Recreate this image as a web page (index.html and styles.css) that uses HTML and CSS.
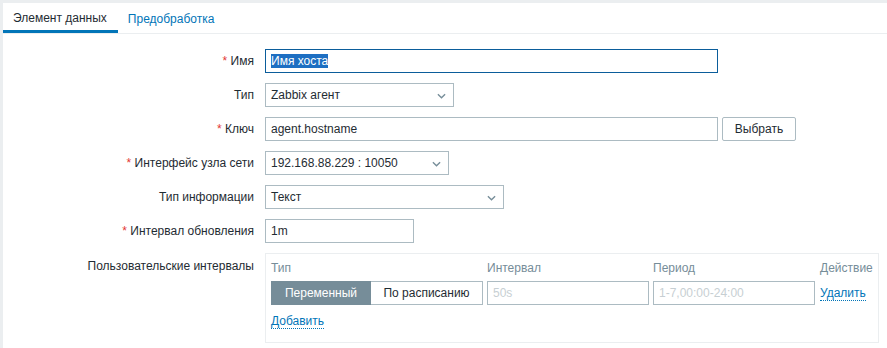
FILE: index.html
```html
<!DOCTYPE html>
<html>
<head>
<meta charset="utf-8">
<link rel="stylesheet" href="styles.css">
</head>
<body>
<div class="panel">
  <div class="tabs">
    <div class="tab active">Элемент данных</div>
    <div class="tab">Предобработка</div>
  </div>
  <div class="form">
    <div class="label"><span class="req">*</span> Имя</div>
    <div class="field"><div class="input focus w453"><span class="sel">Имя хоста</span></div></div>

    <div class="label">Тип</div>
    <div class="field"><div class="input select w188">Zabbix агент<svg class="chev" viewBox="0 0 10 6"><path d="M1 1l4 4 4-4" fill="none" stroke="#768d99" stroke-width="1.5"/></svg></div></div>

    <div class="label"><span class="req">*</span> Ключ</div>
    <div class="field"><div class="input w453">agent.hostname</div><div class="btn">Выбрать</div></div>

    <div class="label"><span class="req">*</span> Интерфейс узла сети</div>
    <div class="field"><div class="input select w183">192.168.88.229 : 10050<svg class="chev" viewBox="0 0 10 6"><path d="M1 1l4 4 4-4" fill="none" stroke="#768d99" stroke-width="1.5"/></svg></div></div>

    <div class="label">Тип информации</div>
    <div class="field"><div class="input select w238">Текст<svg class="chev" viewBox="0 0 10 6"><path d="M1 1l4 4 4-4" fill="none" stroke="#768d99" stroke-width="1.5"/></svg></div></div>

    <div class="label"><span class="req">*</span> Интервал обновления</div>
    <div class="field"><div class="input w149">1m</div></div>

    <div class="label top">Пользовательские интервалы</div>
    <div class="field">
      <div class="box">
        <div class="grid">
          <div class="th">Тип</div>
          <div class="th">Интервал</div>
          <div class="th">Период</div>
          <div class="th">Действие</div>
          <div class="radios"><div class="rb on">Переменный</div><div class="rb">По расписанию</div></div>
          <div class="input ph">50s</div>
          <div class="input ph">1-7,00:00-24:00</div>
          <div class="link">Удалить</div>
        </div>
        <div class="add"><span class="link">Добавить</span></div>
      </div>
    </div>
  </div>
</div>
</body>
</html>
```
FILE: styles.css
```css
html, body { margin: 0; padding: 0; }
body {
  background: #ebeef0;
  font-family: "Liberation Sans", Arial, sans-serif;
  font-size: 12px;
  color: #1f2c33;
  height: 348px;
  overflow: hidden;
}
.panel {
  margin: 3px 0 0 3px;
  background: #fff;
  height: 345px;
}
.tabs {
  display: flex;
  height: 30px;
  border-bottom: 1px solid #ebeef0;
  align-items: stretch;
}
.tab {
  padding: 0 10px;
  line-height: 32px;
  color: #0275b8;
  height: 30px;
  box-sizing: border-box;
}
.tab.active {
  color: #1f2c33;
  border-bottom: 3px solid #0275b8;
  padding: 0 11px 0 10px;
  line-height: 31px;
}
.form {
  display: grid;
  grid-template-columns: 262px 1fr;
  row-gap: 10px;
  padding-top: 15px;
}
.label {
  text-align: right;
  padding-right: 11px;
  height: 24px;
  line-height: 24px;
  white-space: nowrap;
}
.label.top { line-height: 26px; }
.req { color: #e33734; }
.field { display: flex; gap: 4px; align-items: flex-start; }
.input {
  box-sizing: border-box;
  height: 24px;
  border: 1px solid #acbbc2;
  padding: 0 5px;
  line-height: 22px;
  background: #fff;
  position: relative;
  white-space: nowrap;
}
.focus { border-color: #0b5d9b; }
.sel { background: #1e6fc2; color: #fff; }
.w453 { width: 453px; }
.w188 { width: 189px; }
.w183 { width: 184px; }
.w238 { width: 239px; }
.w149 { width: 149px; }
.select .chev {
  position: absolute;
  right: 7px;
  top: 9px;
  width: 9px;
  height: 6px;
}
.btn {
  box-sizing: border-box;
  height: 24px;
  border: 1px solid #acbbc2;
  border-radius: 2px;
  padding: 0 11px;
  line-height: 22px;
  width: 74px;
  text-align: center;
}
.box {
  box-sizing: border-box;
  width: 614px;
  height: 90px;
  border: 1px solid #ebeef0;
  padding: 5px 5px 0 5px;
}
.grid {
  display: grid;
  grid-template-columns: 212px 162px 162px auto;
  column-gap: 4px;
  row-gap: 4px;
}
.grid > :nth-child(4n) { margin-left: 1px; }
.th { color: #768d99; height: 18px; line-height: 18px; }
.radios { display: flex; height: 24px; }
.rb {
  box-sizing: border-box;
  height: 24px;
  line-height: 22px;
  border: 1px solid #acbbc2;
  padding: 0 11px;
  background: #fff;
}
.rb.on {
  background: #768d99;
  border-color: #768d99;
  color: #fff;
  width: 100px;
  text-align: center;
}
.rb + .rb { border-left: none; width: 112px; text-align: center; padding: 0; }
.ph { color: #c7cfd3; }
.link {
  color: #0275b8;
  border-bottom: 1px dotted #0275b8;
  line-height: 14px;
  align-self: center;
  justify-self: start;
}
.add { margin-top: 9px; }
.add .link { display: inline-block; }
```
